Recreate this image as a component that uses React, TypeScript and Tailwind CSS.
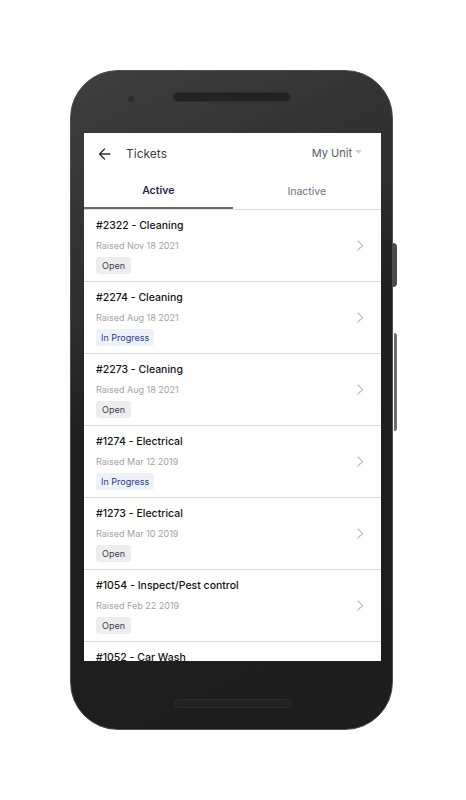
import React from 'react'

const tickets = [
  { id: '#2322', kind: 'Cleaning', raised: 'Nov 18 2021', status: 'Open' },
  { id: '#2274', kind: 'Cleaning', raised: 'Aug 18 2021', status: 'In Progress' },
  { id: '#2273', kind: 'Cleaning', raised: 'Aug 18 2021', status: 'Open' },
  { id: '#1274', kind: 'Electrical', raised: 'Mar 12 2019', status: 'In Progress' },
  { id: '#1273', kind: 'Electrical', raised: 'Mar 10 2019', status: 'Open' },
  { id: '#1054', kind: 'Inspect/Pest control', raised: 'Feb 22 2019', status: 'Open' },
  { id: '#1052', kind: 'Car Wash', raised: 'Feb 20 2019', status: 'Open' },
]

export default function App() {
  return (
    <div className="w-[466px] h-[800px] bg-white pt-[70px] pl-[70px] font-['Inter','Liberation_Sans',sans-serif]">
      <Phone>
        <Screen />
      </Phone>
    </div>
  )
}

function Phone({ children }) {
  return (
    <div className="relative w-[323px] h-[660px] rounded-[48px] border border-[#4e4e4e] bg-[linear-gradient(155deg,#3e3e3e_0%,#2d2d2d_32%,#1f1f1f_46%,#1d1d1d_100%)] flex flex-col">
      <div className="h-[62px] flex items-start pt-[21px] pl-[56px]">
        <div className="mt-[3px] w-[8px] h-[8px] rounded-full bg-[#2a2a2a] border border-[#3a3a3a]" />
        <div className="ml-[38px] w-[118px] h-[10px] rounded-full bg-[#151515] border border-[#2c2c2c] bg-[radial-gradient(#333_0.6px,transparent_0.8px)] bg-[length:2px_2px]" />
      </div>
      <div className="ml-[13px] w-[297px] h-[528px] bg-white overflow-hidden">{children}</div>
      <div className="flex justify-center pt-[38px] pl-[2px]">
        <div className="w-[118px] h-[9px] rounded-full bg-[#151515] border border-[#2c2c2c] bg-[radial-gradient(#333_0.6px,transparent_0.8px)] bg-[length:2px_2px]" />
      </div>
      {/* side buttons */}
      <div className="absolute right-[-5px] top-[172px] w-[4px] h-[44px] rounded-r-sm bg-[#4a4a4a]" />
      <div className="absolute right-[-5px] top-[262px] w-[3px] h-[98px] rounded-r-sm bg-[#6e6e6e]" />
    </div>
  )
}

function Screen() {
  return (
    <div className="flex flex-col">
      <div className="h-[40px] flex items-center pl-[14px] pr-[19px] pt-[1px]">
        <svg width="13" height="12" viewBox="0 0 13 12" fill="none" stroke="#2b2f36" strokeWidth="1.4" strokeLinecap="round" strokeLinejoin="round">
          <path d="M12 6H1.5M6.5 1L1.5 6l5 5" />
        </svg>
        <span className="ml-[15px] text-[12px] text-[#3a3f4a]">Tickets</span>
        <span className="ml-auto text-[11px] text-[#555a62]">My Unit</span>
        <svg className="ml-[3px] mb-[3px]" width="7" height="4" viewBox="0 0 7 4">
          <path d="M0 0h7L3.5 4z" fill="#cfcfcf" />
        </svg>
      </div>
      <div className="flex h-[37px] border-b border-[#dcdcdc]">
        <div className="flex-1 flex items-center justify-center pt-[2px] border-b-2 border-[#6b6b6b] text-[10.5px] font-semibold text-[#1f2a44]">Active</div>
        <div className="flex-1 flex items-center justify-center pt-[2px] text-[10.5px] text-[#6b7280]">Inactive</div>
      </div>
      {tickets.map(t => (
        <TicketRow key={t.id} t={t} />
      ))}
    </div>
  )
}

function TicketRow({ t }) {
  const progress = t.status === 'In Progress'
  return (
    <div className="h-[72px] border-b border-[#d9d9d9] flex items-center pl-[12px] pr-[17px]">
      <div className="flex-1 self-start pt-[9px] flex flex-col">
        <div className="text-[10.5px] font-medium text-[#141414] leading-[14px]">{t.id} - {t.kind}</div>
        <div className="mt-[7px] text-[9px] text-[#a3a3a3] leading-[12px]">Raised {t.raised}</div>
        <div className="mt-[5px] flex">
          <span
            className={
              progress
                ? 'h-[17px] px-[5px] rounded-[3px] bg-[#eef2f8] text-[#1d3a9c] text-[9px] leading-[17px]'
                : 'h-[17px] px-[6px] rounded-[3px] bg-[#ededee] text-[#3a4150] text-[9px] leading-[17px]'
            }
          >
            {t.status}
          </span>
        </div>
      </div>
      <svg width="7" height="11" viewBox="0 0 7 11" fill="none" stroke="#bdbdbd" strokeWidth="1.2" strokeLinecap="round" strokeLinejoin="round">
        <path d="M1 1l4.5 4.5L1 10" />
      </svg>
    </div>
  )
}
